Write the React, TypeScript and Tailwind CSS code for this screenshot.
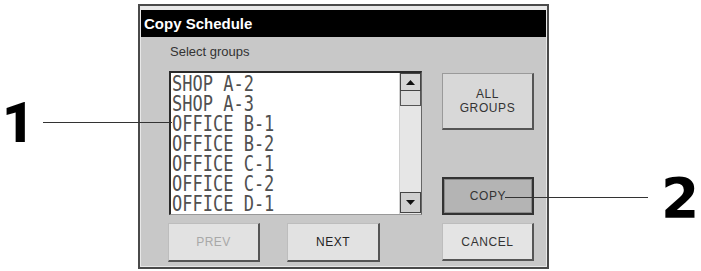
import React from 'react';

const groups = ['SHOP A-2', 'SHOP A-3', 'OFFICE B-1', 'OFFICE B-2', 'OFFICE C-1', 'OFFICE C-2', 'OFFICE D-1'];

const Arrow: React.FC<{ up?: boolean }> = ({ up }) => (
  <svg width="9" height="5" viewBox="0 0 9 5">
    <polygon points={up ? '4.5,0 9,5 0,5' : '0,0 9,0 4.5,5'} fill="#111" />
  </svg>
);

const App: React.FC = () => {
  return (
    <div
      className="relative w-[701px] h-[271px] bg-white overflow-hidden"
      style={{ fontFamily: '"Liberation Sans", Arial, sans-serif' }}
    >
      {/* dialog */}
      <div className="absolute left-[138px] top-[4px] w-[411px] h-[265px] border-2 border-[#4a4a4a] bg-[#e8e8e8]">
        <div className="flex flex-col h-full border-t-[4px] border-l border-r border-b border-[#e8e8e8]">
          <div className="h-[27px] bg-black flex items-center pl-[3px] text-white font-bold text-[15px] leading-none">
            Copy Schedule
          </div>

          <div className="flex flex-1 bg-[#c8c8c8] pl-[27px]">
            {/* left column */}
            <div className="flex flex-col w-[254px]">
              <div className="h-[34px] pt-[7px] pl-[2px] text-[13px] leading-[16px] text-[#333]">Select groups</div>

              <div className="ml-[1px] w-[253px] h-[144px] flex bg-white border-t-2 border-l-2 border-r border-b border-t-[#2a2a2a] border-l-[#2a2a2a] border-r-[#666] border-b-[#999]">
                <div className="flex-1 pl-[1px] pt-[1px]" style={{ fontFamily: '"DejaVu Sans Mono", monospace' }}>
                  {groups.map((g) => (
                    <div
                      key={g}
                      className="h-[20px] text-[17px] leading-[20px] text-[#505050] whitespace-pre origin-left scale-y-[1.2]"
                    >
                      {g}
                    </div>
                  ))}
                </div>
                <div className="w-[22px] flex flex-col bg-[#e6e6e6] border-l border-[#d0d0d0]">
                  <div className="h-[18px] border border-[#444] bg-[#d6d6d6] flex items-center justify-center">
                    <Arrow up />
                  </div>
                  <div className="h-[15px] border-x border-b border-[#555] bg-[#dcdcdc]" />
                  <div className="flex-1" />
                  <div className="h-[21px] mb-[1px] border border-[#444] bg-[#cfcfcf] flex items-center justify-center">
                    <Arrow />
                  </div>
                </div>
              </div>

              <div className="flex mt-[8px] gap-[27px] text-[12px] tracking-[0.5px]">
                <div className="w-[92px] h-[39px] flex items-center justify-center bg-[#e2e2e2] border border-t-[#bdbdbd] border-l-[#bdbdbd] border-r-2 border-b-2 border-r-[#555] border-b-[#555] text-[#a8a8a8]">
                  PREV
                </div>
                <div className="w-[93px] h-[39px] flex items-center justify-center bg-[#e2e2e2] border border-t-[#bdbdbd] border-l-[#bdbdbd] border-r-2 border-b-2 border-r-[#555] border-b-[#555] text-[#222]">
                  NEXT
                </div>
              </div>
            </div>

            {/* right column */}
            <div className="ml-[20px] w-[92px] flex flex-col text-[12px] tracking-[0.6px] text-[#333]">
              <div className="mt-[36px] h-[57px] flex flex-col items-center justify-center leading-[14px] bg-[#d8d8d8] border border-t-[#9a9a9a] border-l-[#9a9a9a] border-r-2 border-b-2 border-r-[#555] border-b-[#555]">
                <span>ALL</span>
                <span>GROUPS</span>
              </div>
              <div className="mt-[47px] h-[38px] flex items-center justify-center bg-[#b4b4b4] border-2 border-[#333] shadow-[inset_0_0_0_1px_#8a8a8a]">
                COPY
              </div>
              <div className="mt-[8px] h-[38px] flex items-center justify-center bg-[#e4e4e4] border border-t-[#bdbdbd] border-l-[#bdbdbd] border-r-2 border-b-2 border-r-[#555] border-b-[#555]">
                CANCEL
              </div>
            </div>
          </div>
        </div>
      </div>

      {/* callouts */}
      <div
        className="absolute left-[2px] top-[95px] text-[56px] leading-none font-black text-black"
        style={{ fontFamily: 'Roboto, sans-serif' }}
      >
        1
      </div>
      <div className="absolute left-[43px] top-[122px] w-[129px] h-px bg-[#333]" />

      <div
        className="absolute left-[661px] top-[171px] text-[55px] leading-none font-bold text-black"
        style={{ fontFamily: '"DejaVu Sans", sans-serif' }}
      >
        2
      </div>
      <div className="absolute left-[505px] top-[197px] w-[143px] h-px bg-[#333]" />
    </div>
  );
};

export default App;
